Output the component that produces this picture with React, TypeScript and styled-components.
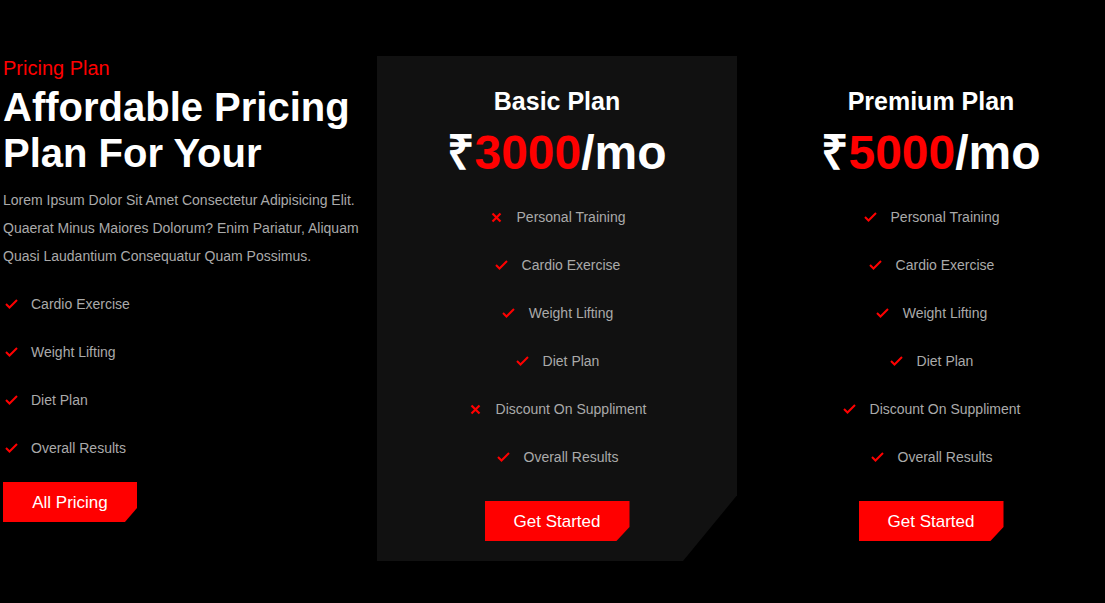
import React from 'react';
import styled, { createGlobalStyle } from 'styled-components';

const GlobalStyle = createGlobalStyle`
    html, body {
        margin: 0;
        padding: 0;
        background: #000;
        overflow: hidden;
    }
    body {
        font-family: 'Liberation Sans', Arial, sans-serif;
    }
`;

const Section = styled.section`
    display: grid;
    grid-template-columns: 360px 360px 360px;
    column-gap: 14px;
    padding: 56px 0 0 3px;
    height: 603px;
    box-sizing: border-box;
    background: #000;
`;

const Intro = styled.div`
    display: flex;
    flex-direction: column;
    align-items: flex-start;
`;

const Eyebrow = styled.p`
    margin: 0;
    font-size: 20px;
    line-height: 24px;
    color: #ff0000;
`;

const Heading = styled.h1`
    margin: 4px 0 10px;
    font-size: 40px;
    line-height: 46px;
    font-weight: 700;
    color: #fff;
`;

const Lead = styled.p`
    margin: 0 0 10px;
    font-size: 14px;
    line-height: 28px;
    color: #aaa;
`;

const List = styled.ul<{ $center?: boolean }>`
    list-style: none;
    margin: 0;
    padding: 0;
    display: flex;
    flex-direction: column;
    align-items: ${p => (p.$center ? 'center' : 'flex-start')};
`;

const Item = styled.li`
    display: flex;
    align-items: center;
    gap: 12px;
    height: 48px;
    font-size: 14px;
    color: #aaa;
`;

const IconBox = styled.span`
    display: inline-flex;
    width: 16px;
    justify-content: center;
`;

const RedButton = styled.button<{ $wide?: number }>`
    border: none;
    cursor: pointer;
    background: #ff0000;
    color: #fff;
    font-family: inherit;
    font-size: 17px;
    padding: 1px 0 0;
    height: 40px;
    width: ${p => p.$wide || 134}px;
    clip-path: polygon(0 0, 100% 0, 100% 65%, 91% 100%, 0 100%);
`;

const Card = styled.div<{ $dark?: boolean }>`
    display: flex;
    flex-direction: column;
    align-items: center;
    height: 505px;
    box-sizing: border-box;
    padding-top: 30px;
    background: ${p => (p.$dark ? '#111' : 'transparent')};
    clip-path: polygon(0 0, 100% 0, 100% 87%, 85% 100%, 0 100%);
`;

const PlanName = styled.h3`
    margin: 0 0 9px;
    font-size: 25px;
    line-height: 30px;
    font-weight: 700;
    color: #fff;
`;

const Price = styled.div`
    margin-bottom: 12px;
    font-size: 48px;
    line-height: 56px;
    font-weight: 700;
    color: #fff;
    span {
        color: #ff0000;
    }
`;

const ButtonRow = styled.div<{ $top?: number }>`
    margin-top: ${p => p.$top ?? 20}px;
`;

const Check = () => (
    <svg width="13" height="10" viewBox="0 0 13 10">
        <polyline points="1,5 4.5,8.5 12,1" fill="none" stroke="#ff0000" strokeWidth="2" />
    </svg>
);

const Cross = () => (
    <svg width="11" height="11" viewBox="0 0 11 11">
        <path d="M1.5 1.5 L9.5 9.5 M9.5 1.5 L1.5 9.5" stroke="#ff0000" strokeWidth="2.2" />
    </svg>
);

type Feature = { label: string; ok: boolean };

const basic: Feature[] = [
    { label: 'Personal Training', ok: false },
    { label: 'Cardio Exercise', ok: true },
    { label: 'Weight Lifting', ok: true },
    { label: 'Diet Plan', ok: true },
    { label: 'Discount On Suppliment', ok: false },
    { label: 'Overall Results', ok: true },
];

const premium: Feature[] = basic.map(f => ({ ...f, ok: true }));

const FeatureItem = ({ label, ok }: Feature) => (
    <Item>
        <IconBox>{ok ? <Check /> : <Cross />}</IconBox>
        {label}
    </Item>
);

const Plan = ({ name, price, features, dark }: { name: string; price: string; features: Feature[]; dark?: boolean }) => (
    <Card $dark={dark}>
        <PlanName>{name}</PlanName>
        <Price>₹<span>{price}</span>/mo</Price>
        <List $center>
            {features.map(f => <FeatureItem key={f.label} {...f} />)}
        </List>
        <ButtonRow>
            <RedButton $wide={145}>Get Started</RedButton>
        </ButtonRow>
    </Card>
);

const App: React.FC = () => {
    return (
        <>
            <GlobalStyle />
            <Section>
                <Intro>
                    <Eyebrow>Pricing Plan</Eyebrow>
                    <Heading>Affordable Pricing Plan For Your</Heading>
                    <Lead>
                        Lorem Ipsum Dolor Sit Amet Consectetur Adipisicing Elit. Quaerat Minus Maiores Dolorum? Enim Pariatur, Aliquam Quasi Laudantium Consequatur Quam Possimus.
                    </Lead>
                    <List>
                        {['Cardio Exercise', 'Weight Lifting', 'Diet Plan', 'Overall Results'].map(l => (
                            <FeatureItem key={l} label={l} ok />
                        ))}
                    </List>
                    <ButtonRow $top={10}>
                        <RedButton>All Pricing</RedButton>
                    </ButtonRow>
                </Intro>
                <Plan name="Basic Plan" price="3000" features={basic} dark />
                <Plan name="Premium Plan" price="5000" features={premium} />
            </Section>
        </>
    );
};

export default App;
